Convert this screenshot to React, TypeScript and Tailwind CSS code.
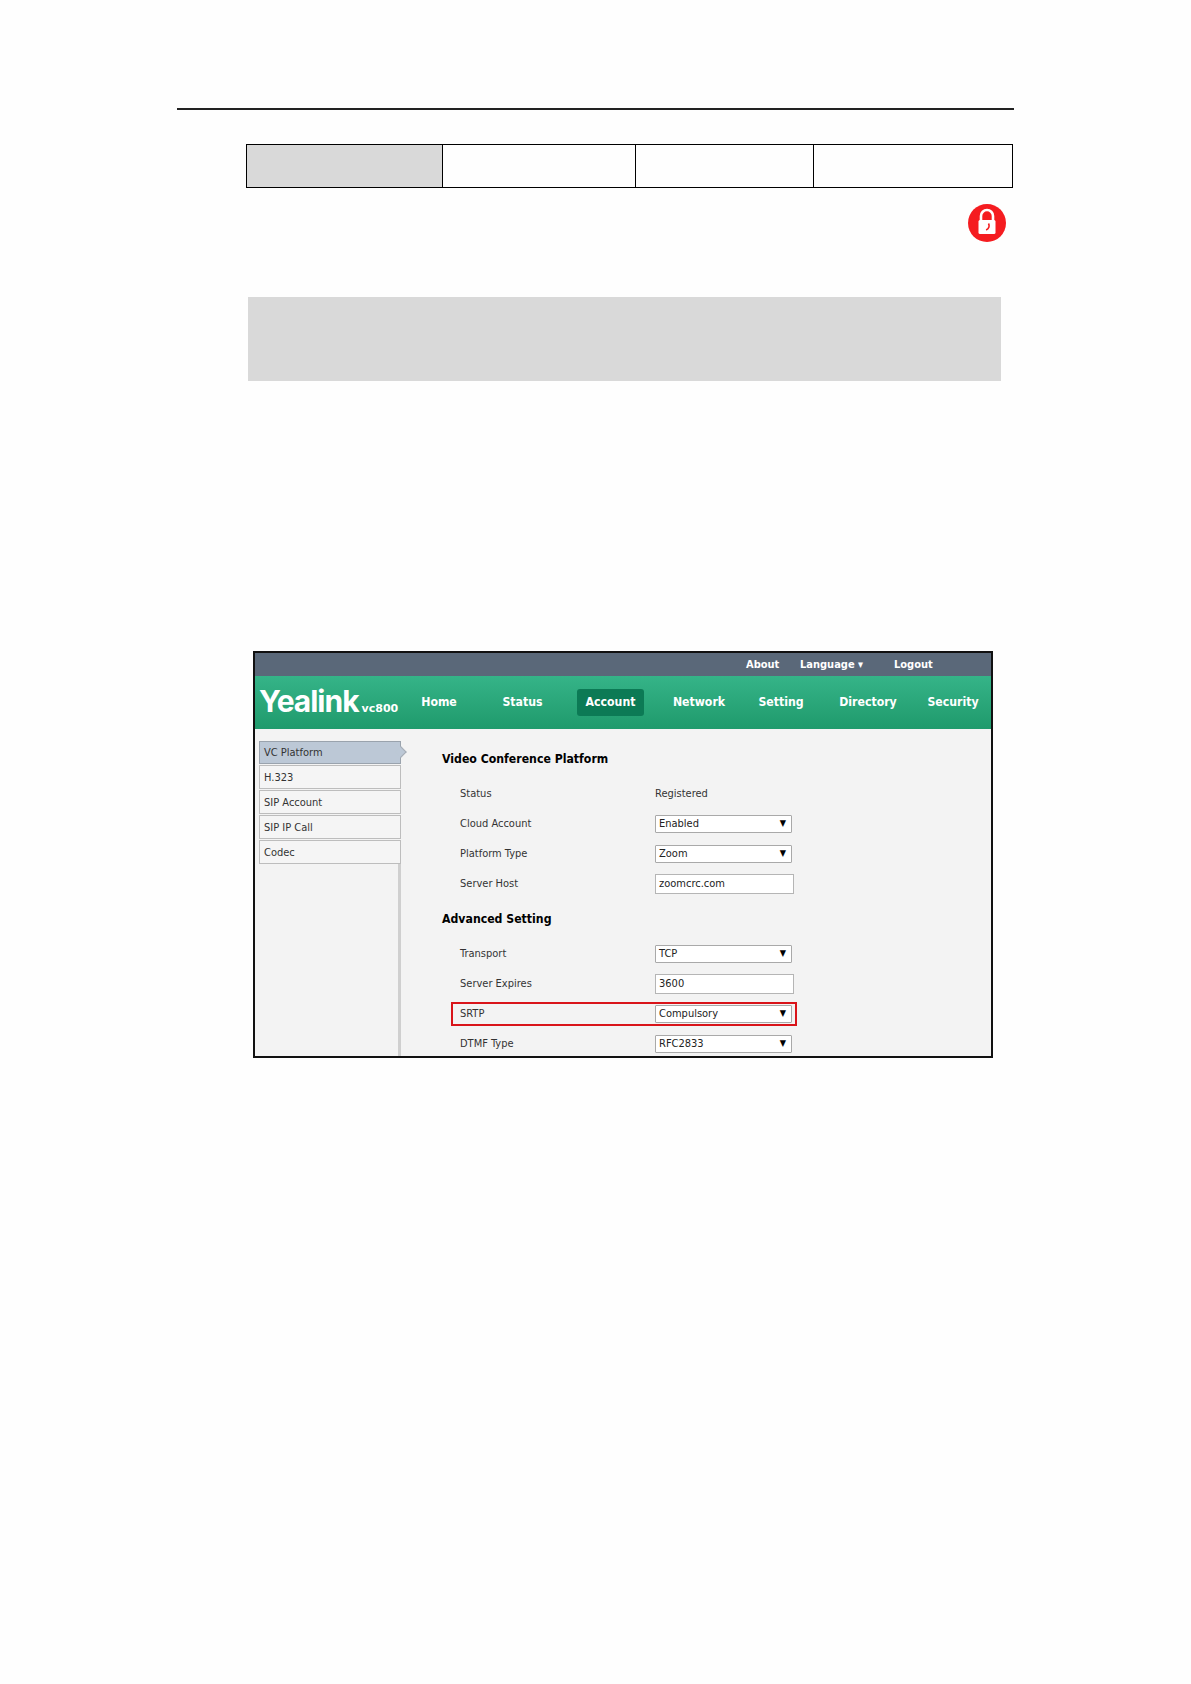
const uiFont = "font-['DejaVu_Sans_Condensed','DejaVu_Sans',sans-serif]";

type Row = {
  label: string;
  value: string;
  kind: "text" | "select" | "input";
  marked?: boolean;
};

const topRows: Row[] = [
  { label: "Status", value: "Registered", kind: "text" },
  { label: "Cloud Account", value: "Enabled", kind: "select" },
  { label: "Platform Type", value: "Zoom", kind: "select" },
  { label: "Server Host", value: "zoomcrc.com", kind: "input" },
];

const advancedRows: Row[] = [
  { label: "Transport", value: "TCP", kind: "select" },
  { label: "Server Expires", value: "3600", kind: "input" },
  { label: "SRTP", value: "Compulsory", kind: "select", marked: true },
  { label: "DTMF Type", value: "RFC2833", kind: "select" },
];

const navItems = [
  { name: "Home", width: "w-[58px]" },
  { name: "Status", width: "w-[109px]" },
  { name: "Account", width: "w-[67px]", active: true },
  { name: "Network", width: "w-[110px]" },
  { name: "Setting", width: "w-[54px]" },
  { name: "Directory", width: "w-[120px]" },
  { name: "Security", width: "w-[50px]" },
];

const sideItems = ["VC Platform", "H.323", "SIP Account", "SIP IP Call", "Codec"];

function LockBadge() {
  return (
    <svg width="38" height="38" viewBox="0 0 38 38">
      <circle cx="19" cy="19" r="19" fill="#f51c20" />
      <path
        d="M13 17v-5a6 6 0 0 1 12 0v5"
        fill="none"
        stroke="#fff"
        strokeWidth="2.6"
      />
      <rect x="10.5" y="16" width="17" height="14" rx="1.5" fill="#fff" />
      <path
        d="M20.5 19.5c1.2 2.2 .8 5-2.4 6.4"
        fill="none"
        stroke="#f51c20"
        strokeWidth="1.6"
      />
    </svg>
  );
}

function FormRow({ row }: { row: Row }) {
  return (
    <div className="relative flex h-[30px] items-center text-[11px] text-[#333]">
      {row.marked && (
        <div className="absolute top-[3px] left-[9px] h-[24px] w-[346px] border-2 border-[#d9141a]" />
      )}
      <span className="w-[213px] pt-[2px] pl-[18px]">{row.label}</span>
      {row.kind === "text" && <span className="pt-[2px]">{row.value}</span>}
      {row.kind === "select" && (
        <div className="flex h-[18px] w-[137px] items-center justify-between rounded-[1px] border border-[#a9a9a9] bg-white pr-[5px] pl-[3px] text-[#222]">
          <span className="pt-[2px]">{row.value}</span>
          <span className="text-[9px] leading-none text-black">▼</span>
        </div>
      )}
      {row.kind === "input" && (
        <div className="flex h-[20px] w-[139px] items-center border border-[#b5b5b5] bg-white pt-[2px] pl-[3px] text-[#222]">
          {row.value}
        </div>
      )}
    </div>
  );
}

function WebShot() {
  return (
    <div
      className={`ml-[253px] flex h-[407px] w-[740px] flex-col overflow-hidden border-2 border-[#111] bg-[#f3f3f3] ${uiFont}`}
    >
      <div className="flex h-[23px] items-center bg-[#5a6879] pt-[3px] pl-[491px] text-[11px] font-bold text-white">
        <span className="w-[54px]">About</span>
        <span className="w-[94px] font-semibold">Language ▾</span>
        <span>Logout</span>
      </div>
      <div className="flex h-[53px] items-center bg-gradient-to-b from-[#35b488] to-[#1f9a6c] text-white">
        <div className="flex w-[155px] items-baseline pl-[4px]">
          <span className="font-['Inter',sans-serif] text-[30px] leading-none font-bold tracking-[-1px]">
            Yealink
          </span>
          <span className="ml-[3px] font-['DejaVu_Sans',sans-serif] text-[11px] font-bold">
            vc800
          </span>
        </div>
        <div className="flex items-center text-[12.2px] font-bold">
          {navItems.map((item) => (
            <div key={item.name} className={item.width}>
              <div
                className={
                  item.active
                    ? "flex h-[27px] items-center justify-center rounded-[3px] bg-[#0c7a55]"
                    : "flex h-[27px] items-center justify-center"
                }
              >
                {item.name}
              </div>
            </div>
          ))}
        </div>
      </div>
      <div className="flex min-h-0 flex-1">
        <div className="ml-[4px] flex w-[142px] flex-col pt-[11px]">
          {sideItems.map((name, i) => (
            <div
              key={name}
              className={
                i === 0
                  ? "relative mt-[1.5px] flex h-[22.5px] items-center border border-[#9aa3ad] bg-[#bcc8d6] pt-[1px] pl-[4px] text-[11px] text-[#333]"
                  : "mt-[1.5px] flex h-[23.5px] items-center border border-[#bdbdbd] bg-[#f5f5f5] pt-[2px] pl-[4px] text-[11px] text-[#333]"
              }
            >
              {name}
              {i === 0 && (
                <span className="absolute top-[6px] right-[-5px] h-[8px] w-[8px] rotate-45 border-t border-r border-[#a5acb5] bg-[#bcc8d6]" />
              )}
            </div>
          ))}
          <div className="flex-1 border-r-[3px] border-[#cfcfcf]" />
        </div>
        <div className="ml-[41px] flex-1 pt-[14px]">
          <div className="flex h-[30px] items-center pt-[3px] text-[12.2px] font-bold text-black">
            Video Conference Platform
          </div>
          <div className="mt-[6px]">
            {topRows.map((row) => (
              <FormRow key={row.label} row={row} />
            ))}
          </div>
          <div className="mt-[5px] flex h-[30px] items-center pt-[2px] text-[12.2px] font-bold text-black">
            Advanced Setting
          </div>
          <div className="mt-[5px]">
            {advancedRows.map((row) => (
              <FormRow key={row.label} row={row} />
            ))}
          </div>
        </div>
      </div>
    </div>
  );
}

export default function App() {
  return (
    <div className="min-h-[1684px] w-full bg-[#fefefe] pt-[108px]">
      <div className="ml-[177px] h-[1.5px] w-[837px] bg-[#222]" />
      <div className="mt-[34px] ml-[246px] grid h-[44px] w-[767px] grid-cols-[196px_193px_178px_1fr] border border-black">
        <div className="border-r border-black bg-[#d9d9d9]" />
        <div className="border-r border-black" />
        <div className="border-r border-black" />
        <div />
      </div>
      <div className="mt-[16px] ml-[968px] w-[38px]">
        <LockBadge />
      </div>
      <div className="mt-[55px] ml-[248px] h-[84px] w-[753px] bg-[#d9d9d9]" />
      <div className="mt-[270px]">
        <WebShot />
      </div>
    </div>
  );
}
